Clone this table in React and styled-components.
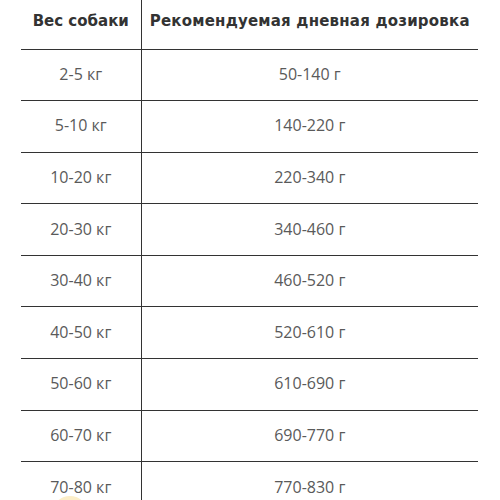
import React from "react";
import styled, { createGlobalStyle } from "styled-components";

const Global = createGlobalStyle`
  html, body { margin: 0; padding: 0; background: #fff; }
  body { font-family: "Open Sans", "Noto Sans", sans-serif; overflow: hidden; }
`;

const Page = styled.div`
  position: relative;
  width: 500px;
  height: 500px;
  overflow: hidden;
  padding: 0 22px 0 21px;
  box-sizing: border-box;
`;

const Table = styled.table`
  width: 457px;
  border-collapse: collapse;
  table-layout: fixed;
`;

const HeadCell = styled.th`
  height: 49px;
  padding: 0 0 6px;
  box-sizing: border-box;
  font-family: "DejaVu Sans", sans-serif;
  font-size: 15px;
  font-weight: 700;
  color: #333;
  text-align: center;
  white-space: nowrap;
  letter-spacing: ${(p) => (p.$divider ? "0.2px" : "0")};
  border-bottom: 1px solid #333;
  border-left: ${(p) => (p.$divider ? "1px solid #333" : "none")};
`;

const Cell = styled.td`
  height: 51.6px;
  padding: 0 0 2px;
  box-sizing: border-box;
  font-size: 16px;
  font-weight: 400;
  color: #5a5a5a;
  text-align: center;
  border-bottom: 1px solid #333;
  border-left: ${(p) => (p.$divider ? "1px solid #333" : "none")};
`;

const Blob = styled.div`
  position: absolute;
  left: 52px;
  top: 496px;
  width: 36px;
  height: 36px;
  border-radius: 50%;
  background: #fbe7b0;
  opacity: 0.7;
`;

const rows = [
  ["2-5 кг", "50-140 г"],
  ["5-10 кг", "140-220 г"],
  ["10-20 кг", "220-340 г"],
  ["20-30 кг", "340-460 г"],
  ["30-40 кг", "460-520 г"],
  ["40-50 кг", "520-610 г"],
  ["50-60 кг", "610-690 г"],
  ["60-70 кг", "690-770 г"],
  ["70-80 кг", "770-830 г"],
];

export default function App() {
  return (
    <Page>
      <Global />
      <Table>
        <colgroup>
          <col style={{ width: "120px" }} />
          <col />
        </colgroup>
        <thead>
          <tr>
            <HeadCell>Вес собаки</HeadCell>
            <HeadCell $divider>Рекомендуемая дневная дозировка</HeadCell>
          </tr>
        </thead>
        <tbody>
          {rows.map(([w, d]) => (
            <tr key={w}>
              <Cell>{w}</Cell>
              <Cell $divider>{d}</Cell>
            </tr>
          ))}
        </tbody>
      </Table>
      <Blob />
    </Page>
  );
}
